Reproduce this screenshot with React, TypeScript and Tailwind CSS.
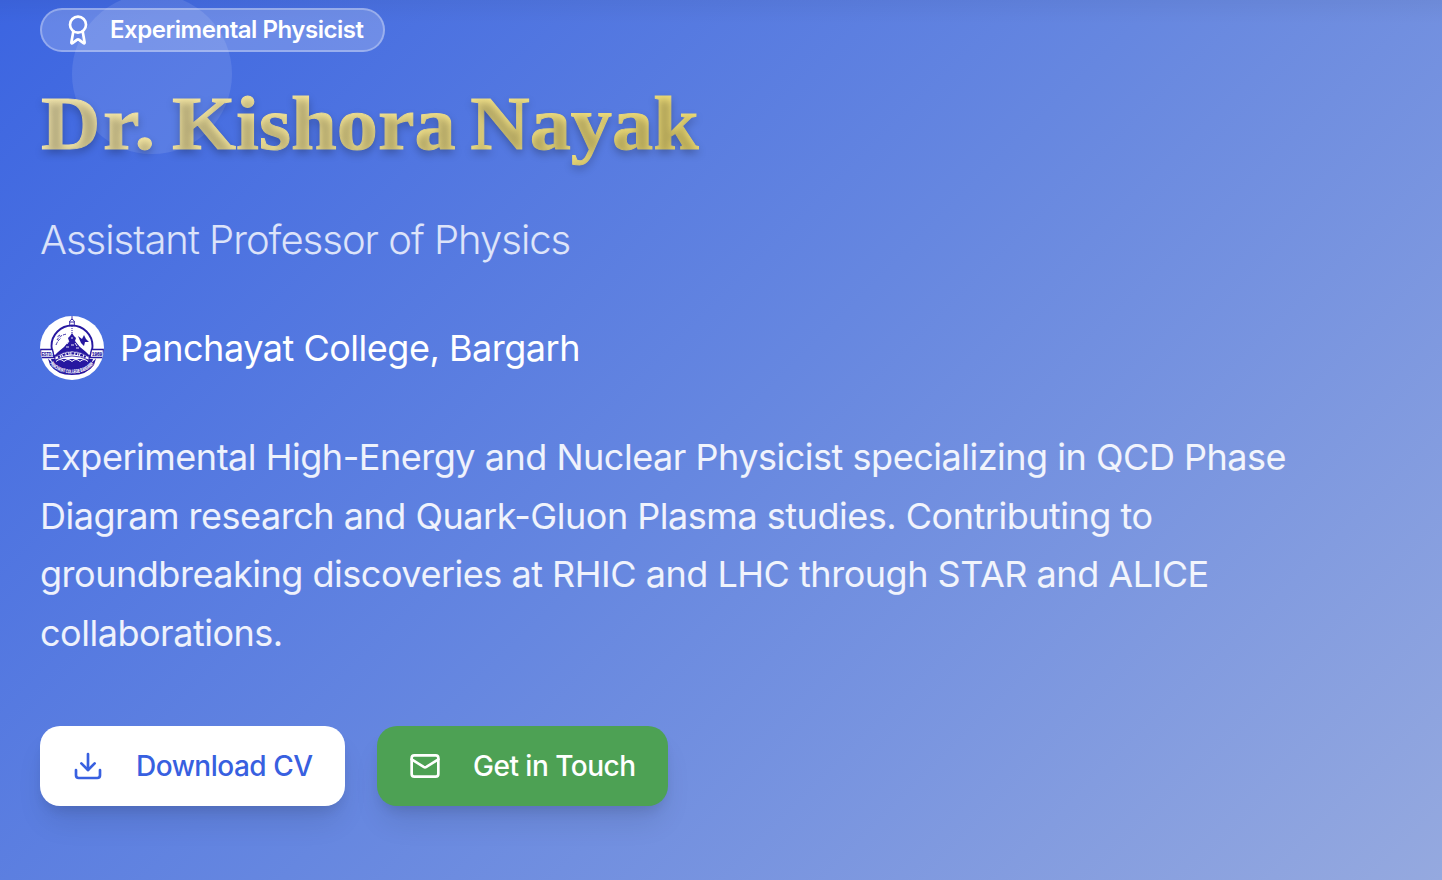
import { Award, Download, Mail } from "lucide-react";

function CollegeSeal() {
  return (
    <svg viewBox="0 0 64 64" className="h-16 w-16 shrink-0 rounded-full bg-white" aria-label="College seal">
      <g fill="none" stroke="#2718a0">
        <circle cx="32" cy="30" r="20.500" strokeWidth="1.900" />
        <path d="M29.700 9V5l2.300-2 2.300 2v4M32 0v4M29.500 6h5" strokeWidth="0.900" />
        <path d="M17 24q3-5 10-6M16 29q2-5 5-7M20 19l-3 2" strokeWidth="0.900" strokeDasharray="3 1" />
        <path d="M32 10v8" strokeWidth="1" strokeDasharray="1 1" />
      </g>
      <path d="M32 17l2 3 2 2-1 3 5 6 6 5 4 4H14l4-4 6-5 5-6-1-3 2-2z" fill="#2718a0" />
      <path d="M38 20l4 3 2-4 2 4 3 3-4 0-1 4-3-3z" fill="#2718a0" />
      <path d="M27 28l2-3M35 27l2 3M26 31h3M31 29h3M36 32h3M31 22h2" stroke="white" strokeWidth="0.900" />
      <path d="M11 43L53 43Q49 58 32 58Q15 58 11 43z" fill="#2718a0" />
      <path d="M15 41Q32 29 49 41V44Q32 36 15 44z" fill="white" stroke="#2718a0" strokeWidth="0.800" />
      <path d="M18 41.200Q32 33.500 46 41.200" fill="none" stroke="#2718a0" strokeWidth="2.200" strokeDasharray="2 1 1 1 3 1" />
      <path d="M16 45.500q4-4 8 0 4-4 8 0 4-4 8 0 4-4 8 0" fill="none" stroke="white" strokeWidth="1" />
      <path d="M8 42.500Q15 52 32 52T56 42.500L54 49Q47 59 32 59T10 49z" fill="#2718a0" />
      <path d="M0.600 33.500H12.500L14 41.500H0.600zM51.500 33.500H63.400V41.500H50z" fill="white" stroke="#2718a0" strokeWidth="1.300" />
      <text x="7" y="39.800" textAnchor="middle" fontFamily="Liberation Sans" fontWeight="bold" fontSize="6" textLength="11" lengthAdjust="spacingAndGlyphs" fill="#2718a0" stroke="#2718a0" strokeWidth="0.200">ESTD.</text>
      <text x="57" y="39.800" textAnchor="middle" fontFamily="Liberation Sans" fontWeight="bold" fontSize="6" textLength="10" lengthAdjust="spacingAndGlyphs" fill="#2718a0" stroke="#2718a0" strokeWidth="0.200">1969</text>
      <path id="seal-arc" d="M10 47.500Q17 57 32 57.200Q47 57 54 47.500" fill="none" />
      <text fontFamily="Liberation Sans" fontWeight="bold" fontSize="5.200" fill="white" stroke="white" strokeWidth="0.150">
        <textPath href="#seal-arc" textLength="49" lengthAdjust="spacingAndGlyphs">PANCHAYAT COLLEGE BARGARH</textPath>
      </text>
    </svg>
  );
}

export default function App() {
  return (
    <main className="relative flex h-[880px] flex-col items-start overflow-hidden bg-[linear-gradient(135deg,#3c65e1_0%,#6687e0_50%,#95a9df_100%)] px-10 pt-2 font-['Inter',sans-serif] text-white">
      <div className="absolute inset-x-0 top-0 h-6 bg-gradient-to-b from-black/4 to-transparent" />
      <div className="absolute -top-[6px] left-[72px] h-40 w-40 rounded-full bg-white/10" />

      <div className="relative flex h-11 w-[345px] items-center rounded-full border-2 border-white/30 bg-white/20 pl-5">
        <Award className="h-8 w-8 shrink-0" strokeWidth={2} />
        <span className="ml-4 whitespace-nowrap text-2xl font-semibold tracking-[-0.47px]">Experimental Physicist</span>
      </div>

      <h1 className="relative mt-[26px] ml-px h-[90px] origin-left scale-x-[1.083] whitespace-nowrap bg-[linear-gradient(135deg,#f9ecb4_0%,#f0dd70_100%)] bg-clip-text font-['Liberation_Serif',serif] text-[76px] leading-[90px] font-bold text-transparent [-webkit-text-stroke:1px_transparent] [text-shadow:0_4px_8px_rgba(0,0,0,0.28)] [word-spacing:-5.5px]">
        <span className="tracking-[2.3px]">Dr.</span> Kishora Nayak
      </h1>

      <p className="relative mt-[44px] text-[40px] leading-[56px] font-light tracking-[-1px] text-white/80">Assistant Professor of Physics</p>

      <div className="relative mt-12 flex items-center gap-4">
        <CollegeSeal />
        <span className="text-4xl tracking-[-0.48px]">Panchayat College, Bargarh</span>
      </div>

      <p className="relative mt-12 w-[1280px] text-4xl leading-[58.5px] tracking-[-0.48px] text-white/90">
        Experimental High-Energy and Nuclear Physicist specializing in QCD Phase Diagram research and Quark-Gluon Plasma studies. Contributing to groundbreaking discoveries at RHIC and LHC through STAR and ALICE collaborations.
      </p>

      <div className="relative mt-16 flex gap-8 text-[28px] font-medium tracking-[-0.5px]">
        <button className="flex h-20 w-[305px] items-center rounded-[20px] bg-white pl-8 text-[#3860e0] shadow-[0_20px_30px_-6px_rgba(0,0,0,0.1),0_8px_12px_-4px_rgba(0,0,0,0.1)]">
          <Download className="h-8 w-8 shrink-0" strokeWidth={2} />
          <span className="ml-8 whitespace-nowrap">Download CV</span>
        </button>
        <button className="flex h-20 w-[291px] items-center rounded-[20px] bg-[#4da154] pl-8 shadow-[0_20px_30px_-6px_rgba(0,0,0,0.1),0_8px_12px_-4px_rgba(0,0,0,0.1)]">
          <Mail className="h-8 w-8 shrink-0" strokeWidth={2} />
          <span className="ml-8 whitespace-nowrap">Get in Touch</span>
        </button>
      </div>
    </main>
  );
}
